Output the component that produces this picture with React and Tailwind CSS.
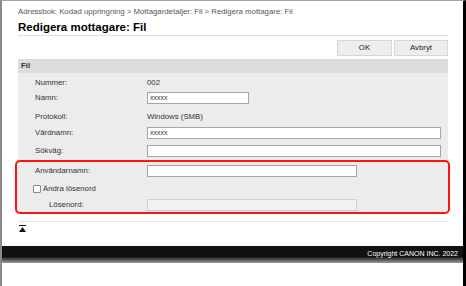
export default function App() {
  const font = { fontFamily: '"Liberation Sans", Arial, sans-serif' };
  const Label = ({ children }) => (
    <div className="w-[112px] shrink-0 text-[7.8px] leading-[12px] text-[#333]">{children}</div>
  );
  const Input = ({ w, value, disabled }) => (
    <div
      className={
        "h-[12px] border px-[2px] text-[7px] leading-[10px] text-[#333] " +
        w +
        (disabled ? " border-[#cfcfcf] bg-[#f2f2f2]" : " border-[#a6a6a6] bg-white")
      }
    >
      {value}
    </div>
  );
  return (
    <div
      className="flex h-[286px] w-[466px] flex-col overflow-hidden border-t border-l-2 border-r-[3px] border-t-[#a3a3a3] border-l-[#8a8a8a] border-r-black bg-white"
      style={font}
    >
      <div className="flex h-[245px] flex-col pl-[16px] pr-[15px]">
        <div className="pt-[6px] text-[7.8px] leading-[10px] text-[#555]">
          Adressbok: Kodad uppringning &gt; Mottagardetaljer: Fil &gt; Redigera mottagare: Fil
        </div>
        <div className="mt-[3px] border-b border-[#dedede] pb-[1px] text-[11.5px] font-bold leading-[14px] text-black">
          Redigera mottagare: Fil
        </div>
        <div className="mt-[4px] flex justify-end gap-[2px]">
          <div className="flex h-[16px] w-[55px] items-center justify-center border border-[#d6d6d6] bg-[#ededed] text-[7.8px] text-[#222]">
            OK
          </div>
          <div className="flex h-[16px] w-[54px] items-center justify-center border border-[#d6d6d6] bg-[#ededed] text-[7.8px] text-[#222]">
            Avbryt
          </div>
        </div>
        <div className="mt-[3px] flex h-[14px] items-center bg-[#dcdcdc] pl-[3px] text-[7.8px] font-bold text-[#333]">
          Fil
        </div>
        <div className="flex h-[141px] flex-col bg-[#ececec]">
          <div className="mt-[4px] flex h-[12px] items-center pl-[17px]">
            <Label>Nummer:</Label>
            <div className="text-[7.8px] leading-[12px] text-[#333]">002</div>
          </div>
          <div className="mt-[3px] flex h-[12px] items-center pl-[17px]">
            <Label>Namn:</Label>
            <Input w="w-[102px]" value="xxxxx" />
          </div>
          <div className="mt-[7px] flex h-[12px] items-center pl-[17px]">
            <Label>Protokoll:</Label>
            <div className="text-[7.8px] leading-[12px] text-[#333]">Windows (SMB)</div>
          </div>
          <div className="mt-[4px] flex h-[12px] items-center pl-[17px] pr-[7px]">
            <Label>Värdnamn:</Label>
            <Input w="flex-1" value="xxxxx" />
          </div>
          <div className="mt-[6px] flex h-[12px] items-center pl-[17px] pr-[7px]">
            <Label>Sökväg:</Label>
            <Input w="flex-1" value="" />
          </div>
          <div className="-ml-[3px] -mr-[2px] mt-[3px] flex flex-col rounded-[5px] border-2 border-[#ff1414] bg-[#ececec] pb-[1px] pt-[1px]">
            <div className="mt-[2px] flex h-[12px] items-center pl-[18px]">
              <Label>Användarnamn:</Label>
              <Input w="w-[210px]" value="" />
            </div>
            <div className="mt-[6px] flex h-[12px] items-center pl-[16px]">
              <div className="h-[8px] w-[8px] rounded-[1px] border border-[#8a8a8a] bg-white" />
              <div className="ml-[2px] text-[7.8px] leading-[12px] text-[#333]">Ändra lösenord</div>
            </div>
            <div className="mt-[4px] flex h-[12px] items-center pl-[32px]">
              <div className="w-[98px] shrink-0 text-[7.8px] leading-[12px] text-[#333]">Lösenord:</div>
              <Input w="w-[210px]" value="" disabled />
            </div>
          </div>
        </div>
        <div className="mt-[7px] border-t border-[#e3e3e3]" />
        <div className="mt-[3px] pl-[1px]">
          <svg width="8" height="7" viewBox="0 0 8 7" className="block">
            <rect x="0" y="0" width="7" height="1" fill="#111" />
            <polygon points="3.5,2 0,7 7,7" fill="#111" />
          </svg>
        </div>
      </div>
      <div className="flex h-[17px] items-start justify-end bg-[linear-gradient(to_bottom,#111_0%,#111_62%,#9c9c9c_100%)] pr-[5px] pt-[3px] text-[7px] leading-[9px] text-white">
        Copyright CANON INC. 2022
      </div>
      <div className="flex-1 bg-white" />
    </div>
  );
}
